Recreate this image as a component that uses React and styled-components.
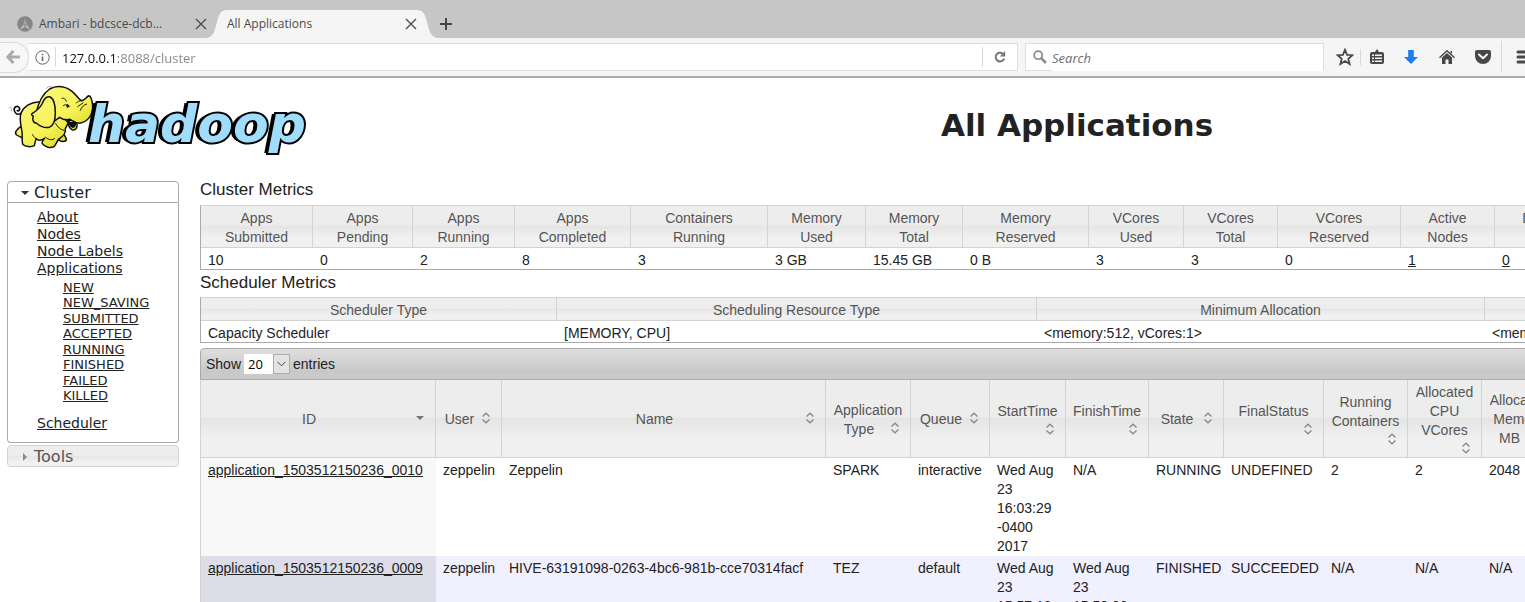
import React from "react";
import styled, { createGlobalStyle, css } from "styled-components";

const GlobalStyle = createGlobalStyle`
  * { box-sizing: border-box; }
  body { margin: 0; background: #fff; color: #222; }
  a { color: inherit; }
`;

const ui = '"Open Sans", "Noto Sans", sans-serif';
const verdana = '"DejaVu Sans", sans-serif';
const arial = '"Liberation Sans", sans-serif';

const glass = css`
  background: linear-gradient(#eeeeee 0%, #ececec 48%, #e5e5e5 50%, #f1f1f1 80%, #f0f0f0 100%);
`;

const Window = styled.div`
  height: 100vh;
  overflow: hidden;
`;

/* ---------- browser frame ---------- */

const TabStrip = styled.div`
  display: flex;
  height: 38px;
  padding-top: 10px;
  background: #c6c6c6;
  font: 12px/28px ${ui};
  color: #4a4a4a;
`;

const Tab = styled.div`
  display: flex;
  align-items: center;
  gap: 6px;
  width: ${(p) => (p.$active ? "190px" : "207px")};
  padding-left: ${(p) => (p.$active ? "0" : "17px")};
  background: ${(p) => (p.$active ? "#f5f5f5" : "transparent")};
`;

const TabTitle = styled.span`
  flex: 1;
  white-space: nowrap;
`;

const IconButton = styled.button`
  display: flex;
  align-items: center;
  justify-content: center;
  flex: none;
  width: ${(p) => p.$w || 12}px;
  height: 28px;
  padding: 0;
  border: 0;
  background: none;
`;

const TabEdge = styled.svg`
  display: block;
  flex: none;
  transform: ${(p) => (p.$flip ? "scaleX(-1)" : "none")};
`;

const Toolbar = styled.div`
  display: flex;
  align-items: center;
  height: 40px;
  border-bottom: 2px solid #ababab;
  background: #f5f5f5;
  font: 13px/26px ${ui};
`;

const BackButton = styled.button`
  display: flex;
  align-items: center;
  justify-content: flex-end;
  flex: none;
  width: 29px;
  height: 31px;
  padding: 0 8px 0 0;
  border: 1px solid #dcdcdc;
  border-left: 0;
  border-radius: 0 16px 16px 0;
  background: #f7f7f7;
`;

const AddressBar = styled.div`
  display: flex;
  align-items: center;
  flex: 1;
  height: 28px;
  border: 1px solid #dedede;
  border-left: 0;
  background: #fff;
`;

const Divider = styled.span`
  flex: none;
  width: 1px;
  height: ${(p) => p.$h || 20}px;
  background: #d8d8d8;
`;

const AddressInput = styled.input`
  flex: 1;
  min-width: 0;
  height: 26px;
  padding: 1px 6px 0;
  border: 0;
  outline: 0;
  font: inherit;
  color: #111;
  background: linear-gradient(90deg, #111 62px, #858585 62px);
  background-clip: text;
  -webkit-text-fill-color: transparent;
`;

const SearchBox = styled.label`
  display: flex;
  align-items: center;
  gap: 5px;
  width: 299px;
  height: 28px;
  margin: 0 6px 0 7px;
  padding-left: 7px;
  border: 1px solid #dedede;
  background: #fff;
`;

const SearchInput = styled.input`
  flex: 1;
  min-width: 0;
  padding: 1px 0 0;
  border: 0;
  outline: 0;
  font: inherit;
  &::placeholder { color: #6e6e6e; font-style: italic; opacity: 1; }
`;

const MenuButton = styled.button`
  display: flex;
  align-items: center;
  flex: none;
  width: 23px;
  height: 28px;
  padding: 0 0 0 14px;
  border: 0;
  background: none;
  overflow: hidden;
  & > svg { flex: none; }
`;

/* ---------- page ---------- */

const Page = styled.div`
  min-width: 1848px;
`;

const PageHeader = styled.header`
  display: flex;
  height: 101px;
`;

const Logo = styled.a`
  display: flex;
  flex: none;
  width: 306px;
  padding: 4px 0 0 5px;
  text-decoration: none;
`;

const Wordmark = styled.span`
  margin: 12px 0 0 -17px;
  font: italic bold 52px/60px ${verdana};
  color: #a0dcfb;
  -webkit-text-stroke: 4px #000;
  paint-order: stroke fill;
  text-shadow: -1px 0 #000, -2px 0 #000, -3px 0 #000, -4px 0 #000;
`;

const Title = styled.h1`
  flex: 1;
  margin: 0;
  padding-top: 27px;
  text-align: center;
  font: bold 31px/40px ${verdana};
`;

const Columns = styled.div`
  display: flex;
  align-items: flex-start;
`;

const Sidebar = styled.nav`
  flex: none;
  width: 172px;
  margin: 2px 21px 0 7px;
  font: 14px/17px ${verdana};
`;

const SectionHead = styled.h3`
  display: flex;
  align-items: center;
  gap: 4px;
  height: 22px;
  margin: 0;
  padding: 1px 0 0 12px;
  border: 1px solid ${(p) => (p.$open ? "#aaa" : "#d3d3d3")};
  border-radius: ${(p) => (p.$open ? "4px 4px 0 0" : "4px")};
  font: 16px/20px ${verdana};
  color: ${(p) => (p.$open ? "#222" : "#555")};
  ${(p) => !p.$open && glass}
`;

const SectionBody = styled.div`
  height: 240px;
  margin-bottom: 2px;
  padding: 6px 0 0 29px;
  border: 1px solid #aaa;
  border-top: 0;
  border-radius: 0 0 4px 4px;
`;

const NavList = styled.ul`
  margin: 0;
  padding: 0;
  list-style: none;
`;

const StateList = styled(NavList)`
  display: flex;
  flex-direction: column;
  justify-content: space-between;
  height: 123px;
  margin: 3px 0 12px 26px;
  font-size: 13px;
  line-height: 15px;
`;

const Content = styled.main`
  flex: 1;
  font: 14px/19px ${arial};
`;

const Heading = styled.h2`
  height: 20px;
  margin: ${(p) => (p.$first ? "0 0 6px" : "2px 0 5px")};
  font: 17px/22px ${arial};
`;

const Table = styled.table`
  width: 100%;
  table-layout: fixed;
  border-spacing: 0;
`;

const MetricsTable = styled(Table)`
  border: 1px solid #aaa;
  border-top-color: #d3d3d3;
`;

const MetricHead = styled.th`
  ${glass}
  padding: 3px 7px 0;
  border: solid #d3d3d3;
  border-width: 0 1px 1px 0;
  font-weight: normal;
  color: #555;
`;

const MetricCell = styled.td`
  padding: 3px 7px 0;
  line-height: 18px;
  white-space: nowrap;
`;

const LengthBar = styled.div`
  display: flex;
  align-items: center;
  height: 32px;
  margin-top: 5px;
  padding-left: 5px;
  border: 1px solid #aaa;
  border-radius: 4px 4px 0 0;
  background: linear-gradient(#dfdfdf, #c8c8c8 75%, #cbcbcb);
`;

const LengthLabel = styled.label`
  display: flex;
  align-items: center;
  gap: 3px;
`;

const SelectWrap = styled.span`
  position: relative;
  display: flex;
`;

const LengthSelect = styled.select`
  appearance: none;
  width: 46px;
  height: 20px;
  padding: 0 0 0 4px;
  border: 0;
  border-radius: 0;
  background: #fff;
  color: #000;
  font: 13px/20px ${ui};
`;

const SelectArrow = styled.span`
  position: absolute;
  right: 0;
  top: 0;
  display: flex;
  align-items: center;
  justify-content: center;
  width: 17px;
  height: 20px;
  border: 1px solid #adadad;
  background: #e3e3e3;
  pointer-events: none;
`;

const AppsTable = styled(Table)`
  border-left: 1px solid #d3d3d3;
`;

const AppsHead = styled.th`
  ${glass}
  height: 78px;
  padding: 2px 7px 0;
  border: solid #d3d3d3;
  border-width: 0 1px 1px 0;
  font-weight: normal;
  color: #555;
`;

const SortIcon = styled.svg`
  float: right;
  width: 16px;
  height: 16px;
  margin-left: 2px;
`;

const AppsRow = styled.tr`
  background: ${(p) => (p.$even ? "#f0f0ff" : "#fff")};
  & > td:first-child { background: ${(p) => (p.$even ? "#dddde9" : "#f8f8f8")}; }
`;

const AppsCell = styled.td`
  padding: 3px 8px 0 7px;
  vertical-align: top;
`;

/* ---------- drawings ---------- */

const Cross = () => (
  <svg width="12" height="12" viewBox="0 0 12 12" stroke="#4a4a4a" strokeWidth="1.3">
    <path d="M1 1L11 11M11 1L1 11" />
  </svg>
);

const Edge = ({ flip }) => (
  <TabEdge $flip={flip} width="20" height="28" viewBox="0 0 20 28">
    <path d="M0 28C7 27 8 19 10 12C12 4 14 0 20 0V28Z" fill="#f5f5f5" />
  </TabEdge>
);

const Caret = ({ open }) => (
  <svg width="10" height="10" viewBox="0 0 10 10" fill={open ? "#333" : "#888"}>
    <path d={open ? "M1 3H9L5 7Z" : "M3 1L7 5L3 9Z"} />
  </svg>
);

const Sort = ({ active }) => (
  <SortIcon viewBox="0 0 16 16" fill="none" stroke="#888" strokeWidth="1.3">
    {active ? (
      <path d="M4 6H12L8 10Z" fill="#777" stroke="none" />
    ) : (
      <path d="M4.5 6.5L8 3.2L11.5 6.5M4.5 9.5L8 12.8L11.5 9.5" />
    )}
  </SortIcon>
);

const Elephant = () => (
  <svg width="100" height="72" viewBox="0 0 300 216" stroke="#111" strokeWidth="4.5" strokeLinejoin="round" strokeLinecap="round">
    <defs>
      <linearGradient id="hide" gradientUnits="userSpaceOnUse" x1="60" y1="20" x2="190" y2="200">
        <stop offset="0" stopColor="#fbf97c" />
        <stop offset="0.6" stopColor="#f6f35a" />
        <stop offset="1" stopColor="#d8d51a" />
      </linearGradient>
    </defs>
    <g fill="url(#hide)">
      <path d="M52 92C38 102 30 94 28 86C25 74 37 69 43 77C46 82 42 88 37 86" fill="none" strokeWidth="5" />
      <path d="M160 146C176 148 181 165 184 171C185 178 174 181 163 175L155 160Z" />
      <path d="M47 134C34 143 27 153 35 159C42 164 48 164 52 168L60 145Z" />
      <path d="M98 60C76 61 57 74 49 91C42 107 47 128 50 143C54 157 49 173 53 187C61 195 79 196 88 191C90 184 91 175 94 170C101 178 111 174 119 169C113 176 109 182 112 185C120 196 137 200 148 193C154 185 157 175 163 170C174 164 183 152 181 140L190 122L130 60Z" />
      <path d="M188 116C189 128 192 138 201 143C211 146 218 139 216 126L205 114Z" />
      <path d="M190 118C196 124 203 123 209 118C213 124 211 134 204 136C195 134 193 126 190 118Z" fill="#111" />
      <path d="M93 94C98 71 109 38 134 21C157 8 184 13 202 29C214 39 220 50 229 56C239 56 243 46 250 42C257 39 262 55 263 72C264 99 249 119 224 124C211 124 202 115 195 112C184 115 171 111 164 106L145 120Z" />
      <path d="M136 45C124 41 116 52 111 66C104 79 94 87 82 94C78 98 80 101 85 102C81 113 86 125 94 123C104 132 119 139 133 136C148 130 151 109 151 92C151 75 147 52 136 45Z" />
    </g>
    <g fill="none" strokeWidth="3">
      <path d="M175 71C180 66 190 68 194 73M171 49C178 46 182 53 184 58M229 56C223 56 218 58 214 63M218 74C223 69 230 67 234 63M226 85C229 77 235 69 245 66M122 166C130 174 144 176 149 169M93 170C87 166 84 161 83 158M152 125C160 137 166 143 177 145" />
      <ellipse cx="188" cy="72" rx="4" ry="5" fill="#111" stroke="none" transform="rotate(-20 188 72)" />
    </g>
    <path d="M125 19L130 14M133 15L139 13M14 79L19 73M19 87L20 80" fill="none" stroke="#777" strokeWidth="2" />
  </svg>
);

/* ---------- data ---------- */

const clusterMetrics = [
  [["Apps", "Submitted"], "10", 112],
  [["Apps", "Pending"], "0", 100],
  [["Apps", "Running"], "2", 102],
  [["Apps", "Completed"], "8", 116],
  [["Containers", "Running"], "3", 137],
  [["Memory", "Used"], "3 GB", 98],
  [["Memory", "Total"], "15.45 GB", 97],
  [["Memory", "Reserved"], "0 B", 126],
  [["VCores", "Used"], "3", 95],
  [["VCores", "Total"], "3", 94],
  [["VCores", "Reserved"], "0", 123],
  [["Active", "Nodes"], "1", 94, true],
  [["Decommissioned", "Nodes"], "0", 163, true],
  [["Lost", "Nodes"], "0", null, true],
];

const schedulerMetrics = [
  ["Scheduler Type", "Capacity Scheduler", 356],
  ["Scheduling Resource Type", "[MEMORY, CPU]", 480],
  ["Minimum Allocation", "<memory:512, vCores:1>", 448],
  ["Maximum Allocation", "<memory:5120, vCores:3>", null],
];

const appColumns = [
  ["ID", 235], ["User", 66], ["Name", 324], ["Application Type", 85], ["Queue", 79],
  ["StartTime", 76], ["FinishTime", 83], ["State", 75], ["FinalStatus", 100],
  ["Running Containers", 84], ["Allocated CPU VCores", 74], ["Allocated Memory MB", 74],
  ["Progress", null],
];

const apps = [
  ["application_1503512150236_0010", "zeppelin", "Zeppelin", "SPARK", "interactive",
    "Wed Aug 23 16:03:29 -0400 2017", "N/A", "RUNNING", "UNDEFINED", "2", "2", "2048", ""],
  ["application_1503512150236_0009", "zeppelin", "HIVE-63191098-0263-4bc6-981b-cce70314facf", "TEZ", "default",
    "Wed Aug 23 15:57:18 -0400 2017", "Wed Aug 23 15:58:06 -0400 2017", "FINISHED", "SUCCEEDED", "N/A", "N/A", "N/A", ""],
];

const states = ["NEW", "NEW_SAVING", "SUBMITTED", "ACCEPTED", "RUNNING", "FINISHED", "FAILED", "KILLED"];

const Cols = ({ widths }) => (
  <colgroup>{widths.map((w, i) => <col key={i} width={w || undefined} />)}</colgroup>
);

function BrowserFrame() {
  return (
    <>
      <TabStrip>
        <Tab>
          <svg width="16" height="16" viewBox="0 0 16 16">
            <circle cx="8" cy="8" r="7.8" fill="#858585" />
            <path d="M8 2L9.3 7.5L13 14L8 10.5L3 14L6.7 7.5Z" fill="#c6c6c6" />
            <path d="M8 3V10.5M5.5 9L10.5 9" stroke="#858585" />
          </svg>
          <TabTitle>Ambari - bdcsce-dcb...</TabTitle>
          <IconButton aria-label="Close Ambari tab"><Cross /></IconButton>
        </Tab>
        <Edge />
        <Tab $active>
          <TabTitle>All Applications</TabTitle>
          <IconButton aria-label="Close All Applications tab"><Cross /></IconButton>
        </Tab>
        <Edge flip />
        <IconButton $w={18} aria-label="New tab">
          <svg width="12" height="12" viewBox="0 0 12 12" stroke="#444" strokeWidth="2"><path d="M6 0V12M0 6H12" /></svg>
        </IconButton>
      </TabStrip>
      <Toolbar>
        <BackButton aria-label="Back">
          <svg width="14" height="14" viewBox="0 0 14 14" fill="none" stroke="#aaa" strokeWidth="3"><path d="M7.5 1L1.8 7L7.5 13M2 7H14" /></svg>
        </BackButton>
        <AddressBar>
          <IconButton $w={26} aria-label="Site information">
            <svg width="15" height="15" viewBox="0 0 15 15" fill="none" stroke="#666">
              <circle cx="7.5" cy="7.5" r="6.7" />
              <path d="M7.5 6.5V11M7.5 3.8V5.3" strokeWidth="1.6" />
            </svg>
          </IconButton>
          <Divider />
          <AddressInput aria-label="Address" defaultValue="127.0.0.1:8088/cluster" />
          <Divider />
          <IconButton $w={34} aria-label="Reload">
            <svg width="12" height="12" viewBox="0 0 12 12">
              <path d="M8.8 2.6A4.4 4.4 0 1 0 10.2 7.6" fill="none" stroke="#777" strokeWidth="2" />
              <path d="M11.2 0V5.4H5.8Z" fill="#777" />
            </svg>
          </IconButton>
        </AddressBar>
        <SearchBox>
          <svg width="14" height="14" viewBox="0 0 14 14" fill="none" stroke="#8c8c8c">
            <circle cx="5.2" cy="5.2" r="4" strokeWidth="1.8" />
            <path d="M8.2 8.2L13 13" strokeWidth="2.6" />
          </svg>
          <SearchInput aria-label="Search" placeholder="Search" />
        </SearchBox>
        <IconButton $w={30} aria-label="Bookmark this page">
          <svg width="18" height="18" viewBox="0 0 18 18" fill="none" stroke="#484848" strokeWidth="1.8">
            <path d="M9 1.8L11.1 6.8L16.4 7.2L12.3 10.7L13.6 16L9 13.1L4.4 16L5.7 10.7L1.6 7.2L6.9 6.8Z" />
          </svg>
        </IconButton>
        <Divider $h={16} />
        <IconButton $w={32} aria-label="Bookmarks list">
          <svg width="14" height="16" viewBox="0 0 14 16">
            <path d="M2 3H5L7 0L9 3H12Q14 3 14 5V13Q14 15 12 15H2Q0 15 0 13V5Q0 3 2 3Z" fill="#484848" />
            <path d="M2 5.5H4V7H2ZM5 5.5H12V7H5ZM2 8.5H4V10H2ZM5 8.5H12V10H5ZM2 11.5H4V13H2ZM5 11.5H12V13H5Z" fill="#f5f5f5" />
          </svg>
        </IconButton>
        <IconButton $w={36} aria-label="Downloads">
          <svg width="14" height="14" viewBox="0 0 14 14" fill="#1a7ff0"><path d="M4.2 0H9.8V7H14L7 14L0 7H4.2Z" /></svg>
        </IconButton>
        <IconButton $w={36} aria-label="Home">
          <svg width="16" height="14" viewBox="0 0 16 14">
            <path d="M0.5 7.7L8 0.8L15.5 7.7" fill="none" stroke="#484848" strokeWidth="1.5" />
            <path d="M8 3L13 7.6V14H9.5V9.5H6.5V14H3V7.6ZM11.5 1H13V4L11.5 2.6Z" fill="#484848" />
          </svg>
        </IconButton>
        <IconButton $w={36} aria-label="Save to Pocket">
          <svg width="16" height="14" viewBox="0 0 16 14">
            <path d="M2 0H14Q16 0 16 2V6A8 8 0 0 1 0 6V2Q0 0 2 0Z" fill="#484848" />
            <path d="M4 4.5L8 8.3L12 4.5" fill="none" stroke="#f5f5f5" strokeWidth="2" strokeLinecap="round" strokeLinejoin="round" />
          </svg>
        </IconButton>
        <Divider $h={32} />
        <MenuButton aria-label="Open menu">
          <svg width="16" height="14" viewBox="0 0 16 14" stroke="#484848" strokeWidth="3" strokeLinecap="round">
            <path d="M2 2H14M2 7H14M2 12H14" />
          </svg>
        </MenuButton>
      </Toolbar>
    </>
  );
}

function SideNav() {
  return (
    <Sidebar>
      <SectionHead $open><Caret open />Cluster</SectionHead>
      <SectionBody>
        <NavList>
          <li><a href="#about">About</a></li>
          <li><a href="#nodes">Nodes</a></li>
          <li><a href="#labels">Node Labels</a></li>
          <li>
            <a href="#apps">Applications</a>
            <StateList>
              {states.map((s) => <li key={s}><a href={"#" + s}>{s}</a></li>)}
            </StateList>
          </li>
          <li><a href="#scheduler">Scheduler</a></li>
        </NavList>
      </SectionBody>
      <SectionHead><Caret />Tools</SectionHead>
    </Sidebar>
  );
}

export default function App() {
  return (
    <Window>
      <GlobalStyle />
      <BrowserFrame />
      <Page>
        <PageHeader>
          <Logo href="#home"><Elephant /><Wordmark>hadoop</Wordmark></Logo>
          <Title>All Applications</Title>
        </PageHeader>
        <Columns>
          <SideNav />
          <Content>
            <Heading $first>Cluster Metrics</Heading>
            <MetricsTable>
              <Cols widths={clusterMetrics.map((m) => m[2])} />
              <thead>
                <tr>
                  {clusterMetrics.map(([[a, b]]) => <MetricHead key={a + b}>{a}<br />{b}</MetricHead>)}
                </tr>
              </thead>
              <tbody>
                <tr>
                  {clusterMetrics.map(([[a, b], value, , link]) => (
                    <MetricCell key={a + b}>{link ? <a href="#nodes">{value}</a> : value}</MetricCell>
                  ))}
                </tr>
              </tbody>
            </MetricsTable>
            <Heading>Scheduler Metrics</Heading>
            <MetricsTable>
              <Cols widths={schedulerMetrics.map((m) => m[2])} />
              <thead>
                <tr>{schedulerMetrics.map(([name]) => <MetricHead key={name}>{name}</MetricHead>)}</tr>
              </thead>
              <tbody>
                <tr>{schedulerMetrics.map(([name, value]) => <MetricCell key={name}>{value}</MetricCell>)}</tr>
              </tbody>
            </MetricsTable>
            <LengthBar>
              <LengthLabel>
                Show
                <SelectWrap>
                  <LengthSelect defaultValue="20">
                    <option>20</option>
                    <option>40</option>
                    <option>60</option>
                  </LengthSelect>
                  <SelectArrow>
                    <svg width="9" height="6" viewBox="0 0 9 6" fill="none" stroke="#444"><path d="M0.5 0.8L4.5 4.8L8.5 0.8" /></svg>
                  </SelectArrow>
                </SelectWrap>
                entries
              </LengthLabel>
            </LengthBar>
            <AppsTable>
              <Cols widths={appColumns.map((c) => c[1])} />
              <thead>
                <tr>
                  {appColumns.map(([name], i) => <AppsHead key={name}>{name}<Sort active={i === 0} /></AppsHead>)}
                </tr>
              </thead>
              <tbody>
                {apps.map((row, r) => (
                  <AppsRow key={row[0]} $even={r % 2 === 1}>
                    {row.map((value, i) => (
                      <AppsCell key={i}>{i === 0 ? <a href={"#" + value}>{value}</a> : value}</AppsCell>
                    ))}
                  </AppsRow>
                ))}
              </tbody>
            </AppsTable>
          </Content>
        </Columns>
      </Page>
    </Window>
  );
}
